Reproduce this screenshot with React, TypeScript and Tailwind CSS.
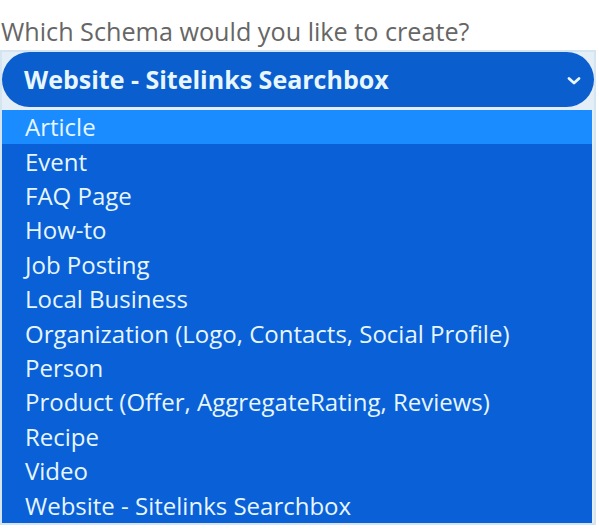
import React from "react";

const options = [
  "Article",
  "Event",
  "FAQ Page",
  "How-to",
  "Job Posting",
  "Local Business",
  "Organization (Logo, Contacts, Social Profile)",
  "Person",
  "Product (Offer, AggregateRating, Reviews)",
  "Recipe",
  "Video",
  "Website - Sitelinks Searchbox",
];

export default function App() {
  return (
    <div
      className="w-[599px] h-[529px] bg-white overflow-hidden"
      style={{ fontFamily: '"Open Sans", "Noto Sans", sans-serif' }}
    >
      <div className="pt-[16px] pl-[1px] text-[25.2px] leading-[30px] text-[#666666]">
        Which Schema would you like to create?
      </div>
      <div className="mt-[4px] w-[596px] border-[2px] border-[#d4e4f0] bg-[#e4eef6]">
        <div className="h-[55px] rounded-full bg-[#0b5ece] flex items-center justify-between pl-[22px] pr-[12px]">
          <span className="text-[25px] font-bold text-[#e8f7ff]">
            Website - Sitelinks Searchbox
          </span>
          <svg width="16" height="11" viewBox="0 0 16 11" className="mt-[2px]">
            <path
              d="M3 3.5 L8 8 L13 3.5"
              fill="none"
              stroke="#e8f7ff"
              strokeWidth="2.8"
              strokeLinecap="round"
              strokeLinejoin="round"
            />
          </svg>
        </div>
        <div className="mt-[3px] bg-[#0a60d6] mr-[2px]">
          {options.map((o, i) => (
            <div
              key={o}
              className={`h-[34.4px] flex items-center pl-[23px] text-[24px] text-[#e6f6ff] ${
                i === 0 ? "bg-[#1a8cff]" : ""
              }`}
            >
              {o}
            </div>
          ))}
        </div>
      </div>
    </div>
  );
}
